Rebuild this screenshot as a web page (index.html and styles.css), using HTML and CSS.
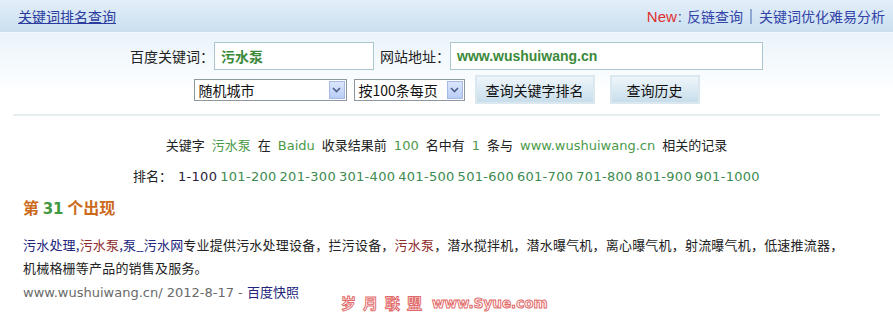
FILE: index.html
```html
<!DOCTYPE html>
<html lang="zh-CN">
<head>
    <meta charset="UTF-8">
    <title>关键词排名查询</title>
    <link rel="stylesheet" href="styles.css">
</head>
<body>
    <div class="top-bar">
        <a class="title-link" href="#">关键词排名查询</a>
        <div class="top-links">
            <span class="new">New<span class="colon">:</span></span>
            <a href="#">反链查询</a>
            <span class="sep"></span>
            <a href="#">关键词优化难易分析</a>
        </div>
    </div>

    <div class="search-area">
        <div class="form-row">
            <label>百度关键词：</label>
            <div class="field field-kw">污水泵</div>
            <label class="site-label">网站地址：</label>
            <div class="field field-site">www.wushuiwang.cn</div>
        </div>
        <div class="form-row row-two">
            <div class="select select-city">
                <span>随机城市</span>
                <span class="arrow"><svg width="9" height="6" viewBox="0 0 9 6"><path d="M1 1 L4.5 4.5 L8 1" fill="none" stroke="#4b5f8a" stroke-width="1.6"/></svg></span>
            </div>
            <div class="select select-page">
                <span>按100条每页</span>
                <span class="arrow"><svg width="9" height="6" viewBox="0 0 9 6"><path d="M1 1 L4.5 4.5 L8 1" fill="none" stroke="#4b5f8a" stroke-width="1.6"/></svg></span>
            </div>
            <button class="btn btn-query">查询关键字排名</button>
            <button class="btn btn-history">查询历史</button>
        </div>
    </div>

    <div class="divider"></div>

    <div class="summary">
        关键字<span class="hl">污水泵</span>在<span class="hl en">Baidu</span>收录结果前<span class="hl en">100</span>名中有<span class="hl en">1</span>条与<span class="hl en">www.wushuiwang.cn</span>相关的记录
    </div>
    <div class="pages">
        <span class="pages-label">排名：</span>
        <span class="cur">1-100</span>
        <a href="#">101-200</a>
        <a href="#">201-300</a>
        <a href="#">301-400</a>
        <a href="#">401-500</a>
        <a href="#">501-600</a>
        <a href="#">601-700</a>
        <a href="#">701-800</a>
        <a href="#">801-900</a>
        <a href="#">901-1000</a>
    </div>

    <div class="found">第 <span class="num">31</span> 个出现</div>

    <div class="result">
        <div class="result-text"><a class="t-blue" href="#">污水处理</a><span class="t-blue">,</span><span class="t-red">污水泵</span><span class="t-blue">,泵_污水网</span>专业提供污水处理设备，拦污设备，<span class="t-red">污水泵</span>，潜水搅拌机，潜水曝气机，离心曝气机，射流曝气机，低速推流器，<br>机械格栅等产品的销售及服务。</div>
        <div class="result-url"><span class="url">www.wushuiwang.cn/ 2012-8-17 - </span><a href="#">百度快照</a></div>
    </div>

    <div class="watermark">
        <span class="wm-cn"><span>岁</span><span>月</span><span>联</span><span>盟</span></span>
        <span class="wm-en">www.Syue.com</span>
    </div>
</body>
</html>
```

FILE: styles.css
```css
* { box-sizing: border-box; margin: 0; padding: 0; }

body {
    width: 893px;
    height: 315px;
    overflow: hidden;
    position: relative;
    background: #fff;
    color: #222;
    font-family: "Noto Sans CJK SC", sans-serif;
    font-size: 13px;
}

a { text-decoration: none; }

.top-bar {
    height: 33px;
    display: flex;
    justify-content: space-between;
    align-items: center;
    padding: 0 8px 0 18px;
    background: linear-gradient(#e3eff9, #c9dff0);
    border-bottom: 1px solid #f2f8fc;
    font-size: 14px;
}

.title-link {
    color: #2b3c9e;
    text-decoration: underline;
}

.top-links {
    display: flex;
    align-items: center;
    gap: 5px;
}

.top-links a { color: #3344a8; }

.new {
    color: #e03030;
    font-family: "Liberation Sans", sans-serif;
    font-size: 15px;
}

.new .colon { color: #3a4a90; margin-left: 1px; }

.sep {
    width: 2px;
    height: 15px;
    margin: 0 2px;
    background: #8fa8d2;
}

.search-area {
    padding-top: 9px;
    background: linear-gradient(#eaf4fb, #ffffff 85%);
    display: flex;
    flex-direction: column;
    align-items: center;
    gap: 5px;
    font-size: 14px;
}

.form-row {
    display: flex;
    align-items: center;
    height: 28px;
}

.field {
    height: 28px;
    border: 1px solid #a9c5cf;
    background: #fff;
    color: #3a8a3a;
    font-weight: bold;
    display: flex;
    align-items: center;
    padding-left: 6px;
}

.field-kw { width: 160px; }

.field-site {
    width: 313px;
    font-family: "Liberation Sans", sans-serif;
}

.site-label { margin-left: 6px; }

.row-two { height: 29px; }

.select {
    height: 22px;
    border: 1px solid #8c979f;
    background: #fff;
    display: flex;
    justify-content: space-between;
    align-items: center;
    padding: 0 1px 0 4px;
    color: #111;
}

.select-city { width: 153px; margin-right: 7px; }
.select-page { width: 111px; margin-right: 10px; }

.arrow {
    width: 16px;
    height: 18px;
    border: 1px solid #a5b9e6;
    background: linear-gradient(#dbe6fc, #b9cdf5);
    display: flex;
    justify-content: center;
    align-items: center;
}

.btn {
    height: 29px;
    border: 2px solid #dbe8f0;
    background: linear-gradient(#eef5fa, #c8deeb);
    font-family: "Noto Sans CJK SC", sans-serif;
    font-size: 14px;
    color: #111;
}

.btn-query { width: 120px; margin-right: 15px; }
.btn-history { width: 90px; }

.divider {
    height: 2px;
    margin: 10px 13px 0;
    background: #e4eef0;
}

.summary,
.pages {
    text-align: center;
    line-height: 30px;
}

.summary { margin-top: 14px; }

.hl {
    color: #4a9a4a;
    margin: 0 7px;
}

.en,
.pages a,
.cur,
.url {
    font-family: "DejaVu Sans", sans-serif;
}

.pages a,
.cur { letter-spacing: 0.3px; }

.pages a { color: #3d8b4f; }

.cur {
    color: #2e1b3e;
    margin-left: 3px;
}

.found {
    padding-left: 23px;
    line-height: 30px;
    font-size: 16px;
    font-weight: bold;
    color: #cc6a1c;
}

.found .num {
    color: #3f9a3f;
    font-family: "DejaVu Sans", sans-serif;
    font-size: 15px;
}

.result {
    padding-left: 23px;
    margin-top: 9px;
}

.result-text {
    line-height: 23px;
    color: #222;
    letter-spacing: 0.2px;
}

.t-blue { color: #22247a; }
.t-red { color: #8e2b2b; }

.result-url { line-height: 26px; }

.url { color: #6a6a6a; }

.result-url a { color: #22247a; }

.watermark {
    position: absolute;
    left: 341px;
    top: 295px;
    display: flex;
    align-items: center;
    gap: 10px;
    height: 16px;
    line-height: 16px;
    color: #fff;
    -webkit-text-stroke: 1px #e26a6a;
    font-weight: bold;
}

.wm-cn {
    display: flex;
    gap: 7px;
    font-size: 15px;
}

.wm-en {
    font-family: "DejaVu Sans", sans-serif;
    font-size: 13.5px;
}
```
